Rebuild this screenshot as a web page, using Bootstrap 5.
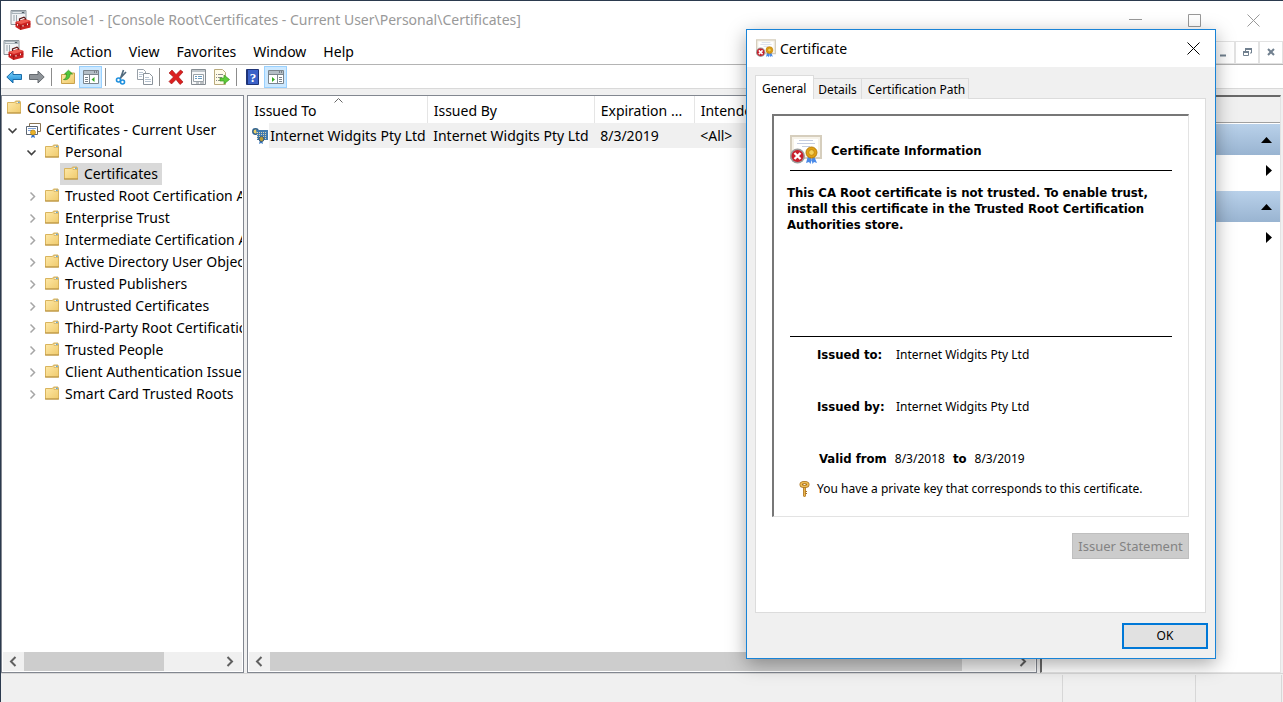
<!DOCTYPE html>
<html lang="en">
<head>
<meta charset="utf-8">
<meta name="viewport" content="width=device-width, initial-scale=1">
<title>Console1</title>
<link href="https://cdn.jsdelivr.net/npm/bootstrap@5.3.0/dist/css/bootstrap.min.css" rel="stylesheet">
<style>
  body { font-family: "Noto Sans", "Open Sans", sans-serif; font-size: 14px; line-height: 22px; color: #000; background: #fff; }
  button { color: inherit; font: inherit; background: transparent; border: 0; padding: 0; }
  svg { display: block; flex: none; }
  .mmc { height: 100vh; border: solid #2b3a4e; border-width: 1px 0 0 1px; }

  .title-row { height: 35px; color: #999; padding: 3px 19px 0 9px; }
  .caption-set { gap: 46px; }
  .menu-row { height: 29px; padding-left: 2px; border-bottom: 1px solid #b4b4b4; }
  .menu-row .menu-items { gap: 17px; margin-left: 7px; padding-top: 3px; }
  .child-box { width: 24px; height: 23px; border: 1px solid #e2e2e2; display: grid; place-items: center; }

  .tool-row { height: 24px; border-bottom: 1px solid #d9d9d9; padding: 1px 0 0 1px; }
  .tool { width: 23px; height: 22px; display: grid; place-items: center; }
  .tool.pressed { background: #cce8ff; border: 1px solid #99d1ff; }
  .tool-sep { width: 1px; height: 18px; background: #8c8c8c; margin: 0 4px 0 3px; }

  .workspace { background: #f0f0f0; padding: 6px 2px 0 0; gap: 3px; }
  .pane { background: #fff; border: 1px solid #828790; min-width: 0; }
  .tree-pane { width: 19%; flex: none; }
  .tree-pane ul { padding: 1px 0 0 4px; margin-right: 1px; overflow: hidden; }
  .tree-pane li { height: 22px; display: flex; align-items: center; white-space: nowrap; }
  .twist { width: 19px; flex: none; }
  .node { display: flex; align-items: center; height: 22px; gap: 5px; color: #000; text-decoration: none; }
  .node.chosen { background: #d9d9d9; padding: 0 4px 0 3px; margin-left: -3px; }
  .lvl-2 { padding-left: 19px; }
  .lvl-3 { padding-left: 57px; }

  .hbar { height: 19px; margin: 0 1px 1px; background: #f0f0f0; }
  .hbar button { width: 21px; display: grid; place-items: center; padding-right: 2px; }
  .hbar .thumb { background: #cdcdcd; }

  .cert-list { table-layout: fixed; width: 100%; white-space: nowrap; }
  .cert-list th { height: 27px; font-weight: 400; padding: 3px 0 0 6px; border-right: 1px solid #e5e5e5; position: relative; }
  .cert-list td { height: 25px; padding: 0 0 0 6px; background: #f0f0f0; }
  .cert-list td:first-child { background: linear-gradient(90deg, #fff 21px, #f0f0f0 21px); padding-left: 4px; }
  .sort-mark { position: absolute; top: 2px; left: 48%; }

  .action-pane { width: 241px; flex: none; background: #fff; border: 1px solid #e3e3e3; border-top: 2px solid #696969; border-left: 2px solid #696969; }
  .action-head { height: 26px; background: #f0f0f0; border-bottom: 1px solid #a0a0a0; margin-bottom: 1px; }
  .action-group { height: 31px; background: linear-gradient(#b9d1ea, #99b4d1); }
  .action-more { height: 36px; }
  .action-group button, .action-more button { padding-right: 8px; height: 100%; }
  .action-more button { height: 30px; display: block; margin-left: auto; }

  .status-row { height: 29px; background: #f0f0f0; border-top: 1px solid #d7d7d7; padding: 1px 1px 0 0; }
  .status-row div { border-right: 1px solid #d7d7d7; }

  .cert-dialog { position: absolute; left: 746px; top: 29px; width: 470px; border: 1px solid #1883d7; background: #f0f0f0;
    box-shadow: 0 5px 18px rgba(0,0,0,.34); font-size: 12px; line-height: 16px; }
  .dlg-title { height: 37px; background: #fff; font-size: 14px; padding: 0 15px 0 9px; }
  .dlg-tabs { padding: 8px 0 0 8px; height: 31px; border: 0; }
  .dlg-tabs .nav-link { border: 1px solid #dcdcdc; border-left: 0; border-bottom: 0; border-radius: 0; color: #000; background: #f0f0f0; height: 21px; margin: 0; padding: 1px 4px 0; }
  .dlg-tabs .nav-item:last-child .nav-link { padding: 1px 3px 0 6px; }
  .dlg-tabs .nav-link.active { border: 1px solid #dcdcdc; border-bottom: 0; background: #fff; color: #000; height: 24px; padding: 2px 7px 0 6px; position: relative; z-index: 1; }
  .dlg-page { background: #fff; border: 1px solid #dcdcdc; margin: 0 9px 10px 8px; padding: 15px 16px 53px 16px; }
  .sunken { border: solid #e3e3e3; border-width: 2px 1px 1px 2px; border-top-color: #777; border-left-color: #777; height: 403px; padding: 19px 16px 0 14px; }
  .strong-text { font-family: "DejaVu Sans Condensed", "DejaVu Sans", sans-serif; font-size: 13px; font-weight: 700; }
  .info-head { height: 36px; border-bottom: 1px solid #000; margin-left: 2px; gap: 9px; }
  .info-text { height: 165px; padding-top: 14px; margin: 0 -8px 0 -1px; width: 375px; }
  .info-body { border-top: 1px solid #000; margin-left: 2px; padding: 10px 0 0 27px; }
  .fact { height: 52px; }
  .fact dt { width: 79px; }
  .validity { gap: 8px; padding-left: 2px; height: 30px; }
  .key-line { margin-left: -18px; gap: 7px; }
  .win-btn { height: 26px; border: 1px solid #bfbfbf; background: #ccc; color: #838383; padding: 0; }
  .issuer-btn { width: 117px; font-size: 13px; }
  .ok-btn { border: 2px solid #0078d7; background: #e1e1e1; color: #000; width: 86px; }
  .dlg-foot { padding: 0 7px 9px; }
</style>
</head>
<body>
<svg class="position-absolute" width="0" height="0" aria-hidden="true">
  <linearGradient id="gFold" x1="0" y1="0" x2="1" y2="1"><stop offset="0" stop-color="#ffeaaa"/><stop offset="1" stop-color="#efca6c"/></linearGradient>
  <linearGradient id="gBlue" x1="0" y1="0" x2="0" y2="1"><stop offset="0" stop-color="#7fd4fb"/><stop offset="1" stop-color="#1487d4"/></linearGradient>
  <symbol id="folder" viewBox="0 0 16 16"><path d="M1.500 2.500h7l1-1.500h4.500v1.500h.5v10.500h-13z" fill="url(#gFold)" stroke="#d9b45e"/><path d="M10 1.500h4v2h-4z" fill="#fff6d4" stroke="#c9a24c" stroke-width=".6"/><path d="M12 2.300h1.700" stroke="#3b94d9"/><path d="M1 13h14" stroke="#b58f3e"/></symbol>
  <symbol id="toolbox" viewBox="0 0 20 20"><path d="M.5.5h15v14H.5z" fill="#f1f3f5" stroke="#8c959c"/><path d="M1 1h14v3H1z" fill="#a9b3ba"/><path d="M2 2.500h9" stroke="#e5e9ec"/><path d="M11.500 2.500h2" stroke="#505b63"/><path d="M2.500 6h2M2.500 8h2M2.500 10h2M6 5v9" stroke="#9aa5ad"/><path d="M5 12l9.500-3 5.500 2v6.500L10 20l-5-3z" fill="#cc2222"/><path d="M5 12l9.500-3 5.500 2-9.500 3z" fill="#ee5b50"/><path d="M9 11V9l4.500-1.700 1.300 1v1.500" fill="none" stroke="#5a1818" stroke-width="1.200"/><path d="M5 14.500l5.200 2 9.800-2.500M10.200 15v5" stroke="#8f1212" stroke-width=".7" fill="none"/><path d="M7 14v1.700M12.500 15v1.700M17 13.500v1.700" stroke="#fff" stroke-width=".9"/></symbol>
  <symbol id="cert-bad" viewBox="0 0 32 30"><path d="M1 1h30v22H1z" fill="#f6f2e8" stroke="#d6cebd" stroke-width="2"/><path d="M4 4h24v16H4z" fill="#fff"/><path d="M9 5.500h14M7 8.500h18M12 11.500h8" stroke="#c5cde0" stroke-width="1"/><path d="M18 21l-2 7 3-1 1.500 2 2-7zM24 21l3 7-3-1-1.500 2-1.500-7z" fill="#4a8ae8"/><circle cx="21.500" cy="17.500" r="5.500" fill="#e0a112" stroke="#b87b08"/><circle cx="21.500" cy="17.500" r="2.800" fill="#f5cf55" stroke="#b87b08" stroke-width=".7"/><circle cx="7.500" cy="21" r="7.500" fill="#9b9b9b"/><circle cx="7.500" cy="21" r="6" fill="#c91f2c"/><path d="M4.500 18l6 6m0-6l-6 6" stroke="#fff" stroke-width="2.300"/></symbol>
  <symbol id="arr-l" viewBox="0 0 9 11"><path d="M7.500 1L3 5.500 7.500 10" fill="none" stroke="#606060" stroke-width="2"/></symbol>
  <symbol id="arr-r" viewBox="0 0 9 11"><path d="M1.500 1L6 5.500 1.500 10" fill="none" stroke="#606060" stroke-width="2"/></symbol>
  <symbol id="up-tri" viewBox="0 0 11 6"><path d="M5.500 0L11 6H0z"/></symbol>
  <symbol id="side-tri" viewBox="0 0 6 11"><path d="M0 0l6 5.500L0 11z"/></symbol>
  <symbol id="chev-open" viewBox="0 0 12 12"><path d="M2.500 4.500L6.500 8.500 10.500 4.500" fill="none" stroke="#404040" stroke-width="1.600"/></symbol>
  <symbol id="chev-shut" viewBox="0 0 12 12"><path d="M5.500 2.500l4 4-4 4" fill="none" stroke="#a6a6a6" stroke-width="1.500"/></symbol>
</svg>

<div class="mmc d-flex flex-column position-relative overflow-hidden">
  <header class="title-row d-flex align-items-center justify-content-between">
    <div class="d-flex align-items-center gap-1"><svg width="21" height="20"><use href="#toolbox"/></svg><span>Console1 - [Console Root\Certificates - Current User\Personal\Certificates]</span></div>
    <div class="caption-set d-flex align-items-center">
      <button aria-label="Minimize"><svg width="13" height="13"><path d="M0 5.500h13" stroke="#999"/></svg></button>
      <button aria-label="Maximize"><svg width="13" height="13"><path d="M.5.5h12v12H.5z" fill="none" stroke="#999"/></svg></button>
      <button class="pe-1" aria-label="Close"><svg width="13" height="13"><path d="M.5.5l12 12m0-12l-12 12" stroke="#999"/></svg></button>
    </div>
  </header>

  <nav class="menu-row d-flex align-items-center justify-content-between">
    <div class="d-flex align-items-center">
      <svg width="21" height="20"><use href="#toolbox"/></svg>
      <div class="menu-items d-flex"><button>File</button><button>Action</button><button>View</button><button>Favorites</button><button>Window</button><button>Help</button></div>
    </div>
    <div class="d-flex pt-1">
      <button class="child-box" aria-label="Minimize child"><svg width="7" height="9"><path d="M0 7.500h6" stroke="#71808f" stroke-width="2"/></svg></button>
      <button class="child-box" aria-label="Restore child"><svg width="9" height="9"><path d="M2.500 3V1h6v4H7M.5 3.500h5v4h-5z" fill="none" stroke="#71808f"/><path d="M2 1h7M0 4h6" stroke="#71808f" stroke-width="2"/></svg></button>
      <button class="child-box" aria-label="Close child"><svg width="8" height="8"><path d="M1 1l6 6m0-6L1 7" stroke="#71808f" stroke-width="2"/></svg></button>
    </div>
  </nav>

  <div class="tool-row d-flex align-items-center" role="toolbar" aria-label="Tools">
    <button class="tool" aria-label="Back"><svg width="16" height="14"><path d="M.8 7L7 1v3.500h8.500v5H7V13z" fill="url(#gBlue)" stroke="#1b6ca8"/></svg></button>
    <button class="tool" aria-label="Forward"><svg width="16" height="14"><path d="M15.200 7L9 1v3.500H.5v5H9V13z" fill="#8f9499" stroke="#666b70"/></svg></button>
    <span class="tool-sep"></span>
    <button class="tool" aria-label="Up one level"><svg width="16" height="16"><path d="M1.500 5.500h5l1-1.500h7v10.500h-13z" fill="url(#gFold)" stroke="#c9a24c"/><path d="M3.500 10.500c2 0 3-2.500 3-5.500H4.500L8.500 1.200 12.500 5h-2.500c0 4-2.500 6.500-6.500 5.500z" fill="#4fc63a" stroke="#2e9420" stroke-width=".7"/></svg></button>
    <button class="tool pressed" aria-label="Show console tree"><svg width="16" height="14"><path d="M.5.5h15v13H.5z" fill="#fff" stroke="#7b858d"/><path d="M1 2.500h14" stroke="#b3bdc5" stroke-width="3"/><path d="M11 2h1m1 0h1" stroke="#3d464d"/><path d="M1 4.500h14M6.500 5v9" stroke="#7b858d"/><path d="M2 7.500h3M2 9.500h3M2 11.500h3" stroke="#7b858d"/><path d="M11.500 7v5L8.500 9.500z" fill="#35ab22"/></svg></button>
    <span class="tool-sep"></span>
    <button class="tool" aria-label="Cut"><svg width="16" height="16"><path d="M9.500 1L6.500 9.500M12 3L5.500 10" stroke="#526a7d" stroke-width="1.700"/><circle cx="4.500" cy="11" r="2" fill="#fff" stroke="#1e8fdd" stroke-width="1.600"/><circle cx="8.500" cy="13" r="2" fill="#fff" stroke="#1e8fdd" stroke-width="1.600"/></svg></button>
    <button class="tool" aria-label="Copy"><svg width="16" height="16"><path d="M.5.5h6l2 2v8h-8z" fill="#fff" stroke="#98a0a8"/><path d="M6.500 4.500h6l3 3v8h-9z" fill="#fff" stroke="#8a929a"/><path d="M2 3.500h4M2 5.500h4M2 7.500h3M8 8.500h4M8 10.500h6M8 12.500h6" stroke="#b7c4d2"/></svg></button>
    <span class="tool-sep"></span>
    <button class="tool" aria-label="Delete"><svg width="16" height="16"><path d="M1 4l3-3 4 4.500L12.500 1l2.500 2-4.500 5L15 13l-3 2.500-4-5L3.500 15 1 12.500 5.500 8z" fill="#dc1f1f" stroke="#9d0d0d" stroke-width=".6"/></svg></button>
    <button class="tool" aria-label="Properties"><svg width="15" height="16"><path d="M.5.5h14v15H.5z" fill="#f7f8f9" stroke="#858c92"/><path d="M1 2h13" stroke="#bfc6cb" stroke-width="2"/><path d="M2.500 5.500h10v7h-10z" fill="#fff" stroke="#9aa2a8"/><path d="M4 7.500h2M7 7.500h4M4 9.500h2M7 9.500h4" stroke="#6a9cc0"/><path d="M5 14h3m1 0h4" stroke="#858c92"/></svg></button>
    <button class="tool" aria-label="Export list"><svg width="17" height="16"><path d="M1.500.5h8l3 3v12h-11z" fill="#fffbe8" stroke="#b9aa7c"/><path d="M3 5.500h1m1 0h5M3 8.500h1m1 0h4M3 11.500h1m1 0h4" stroke="#8b8b8b"/><path d="M7 9h4V6l5.500 4.500L11 15v-3H7z" fill="#5ccb39" stroke="#3c9c22" stroke-width=".7"/></svg></button>
    <span class="tool-sep"></span>
    <button class="tool" aria-label="Help"><svg width="13" height="16"><path d="M.5.5h12v15H.5z" fill="#3c62c8" stroke="#1f3478"/><path d="M1.500 1v14" stroke="#1f3478"/><text x="7" y="12.500" text-anchor="middle" font-family="Liberation Serif, serif" font-size="13" font-weight="700" fill="#fff">?</text></svg></button>
    <button class="tool pressed" aria-label="Show action pane"><svg width="16" height="14"><path d="M.5.5h15v13H.5z" fill="#fff" stroke="#7b858d"/><path d="M1 2.500h14" stroke="#b3bdc5" stroke-width="3"/><path d="M11 2h1m1 0h1" stroke="#3d464d"/><path d="M1 4.500h14M9.500 5v9" stroke="#7b858d"/><path d="M11 7.500h3M11 9.500h3M11 11.500h3" stroke="#7b858d"/><path d="M4 7v5l3-2.500z" fill="#35ab22"/></svg></button>
  </div>

  <main class="workspace d-flex flex-grow-1">
    <section class="pane tree-pane d-flex flex-column">
      <ul class="list-unstyled mb-0 flex-grow-1">
        <li><a class="node" href="#"><svg width="16" height="16"><use href="#folder"/></svg>Console Root</a></li>
        <li><button class="twist" aria-label="Collapse"><svg width="12" height="12"><use href="#chev-open"/></svg></button><a class="node" href="#"><svg width="16" height="16"><path d="M4.500 1.500h11v8h-11z" fill="#fff" stroke="#8a7554"/><path d="M1.500 4.500h11v8h-11z" fill="#fff" stroke="#5c6570"/><path d="M3 6.500h8M3 8.500h4" stroke="#7c9fd6"/><path d="M7 12l-1 4 2-1 2 1-1-4z" fill="#2f6fd0"/><circle cx="8" cy="10.500" r="2.500" fill="#eab32c" stroke="#a97908" stroke-width=".6"/></svg>Certificates - Current User</a></li>
        <li class="lvl-2"><button class="twist" aria-label="Collapse"><svg width="12" height="12"><use href="#chev-open"/></svg></button><a class="node" href="#"><svg width="16" height="16"><use href="#folder"/></svg>Personal</a></li>
        <li class="lvl-3"><a class="node chosen" href="#"><svg width="16" height="16"><use href="#folder"/></svg>Certificates</a></li>
        <li class="lvl-2"><button class="twist" aria-label="Expand"><svg width="12" height="12"><use href="#chev-shut"/></svg></button><a class="node" href="#"><svg width="16" height="16"><use href="#folder"/></svg>Trusted Root Certification Authorities</a></li>
        <li class="lvl-2"><button class="twist" aria-label="Expand"><svg width="12" height="12"><use href="#chev-shut"/></svg></button><a class="node" href="#"><svg width="16" height="16"><use href="#folder"/></svg>Enterprise Trust</a></li>
        <li class="lvl-2"><button class="twist" aria-label="Expand"><svg width="12" height="12"><use href="#chev-shut"/></svg></button><a class="node" href="#"><svg width="16" height="16"><use href="#folder"/></svg>Intermediate Certification Authorities</a></li>
        <li class="lvl-2"><button class="twist" aria-label="Expand"><svg width="12" height="12"><use href="#chev-shut"/></svg></button><a class="node" href="#"><svg width="16" height="16"><use href="#folder"/></svg>Active Directory User Object</a></li>
        <li class="lvl-2"><button class="twist" aria-label="Expand"><svg width="12" height="12"><use href="#chev-shut"/></svg></button><a class="node" href="#"><svg width="16" height="16"><use href="#folder"/></svg>Trusted Publishers</a></li>
        <li class="lvl-2"><button class="twist" aria-label="Expand"><svg width="12" height="12"><use href="#chev-shut"/></svg></button><a class="node" href="#"><svg width="16" height="16"><use href="#folder"/></svg>Untrusted Certificates</a></li>
        <li class="lvl-2"><button class="twist" aria-label="Expand"><svg width="12" height="12"><use href="#chev-shut"/></svg></button><a class="node" href="#"><svg width="16" height="16"><use href="#folder"/></svg>Third-Party Root Certification Authorities</a></li>
        <li class="lvl-2"><button class="twist" aria-label="Expand"><svg width="12" height="12"><use href="#chev-shut"/></svg></button><a class="node" href="#"><svg width="16" height="16"><use href="#folder"/></svg>Trusted People</a></li>
        <li class="lvl-2"><button class="twist" aria-label="Expand"><svg width="12" height="12"><use href="#chev-shut"/></svg></button><a class="node" href="#"><svg width="16" height="16"><use href="#folder"/></svg>Client Authentication Issuers</a></li>
        <li class="lvl-2"><button class="twist" aria-label="Expand"><svg width="12" height="12"><use href="#chev-shut"/></svg></button><a class="node" href="#"><svg width="16" height="16"><use href="#folder"/></svg>Smart Card Trusted Roots</a></li>
      </ul>
      <div class="hbar d-flex"><button aria-label="Scroll left"><svg width="9" height="11"><use href="#arr-l"/></svg></button><div class="flex-grow-1"><div class="thumb h-100" style="width:71%"></div></div><button aria-label="Scroll right"><svg width="9" height="11"><use href="#arr-r"/></svg></button></div>
    </section>

    <section class="pane flex-grow-1 d-flex flex-column">
      <div class="flex-grow-1">
        <table class="cert-list">
          <colgroup><col style="width:179px"><col style="width:167px"><col style="width:100px"><col></colgroup>
          <thead><tr>
            <th scope="col">Issued To<svg class="sort-mark" width="9" height="5"><path d="M.5 4.500l4-4 4 4" fill="none" stroke="#666"/></svg></th>
            <th scope="col">Issued By</th><th scope="col">Expiration ...</th><th scope="col">Intended Purposes</th></tr></thead>
          <tbody><tr>
            <td><div class="d-flex align-items-center"><svg width="18" height="16"><circle cx="3.500" cy="3.500" r="2.700" fill="#e9d06b" stroke="#30628f" stroke-width="1.500"/><path d="M4 2h12v10H5V6z" fill="#3f7ab0"/><path d="M5 4.500h10M5 6.500h10M5 8.500h10M5 10.500h10" stroke="#dcd2ae" stroke-dasharray="1 1"/><path d="M8 12l-1 4 2-1 2 1-1-4z" fill="#3577c0"/><circle cx="9.500" cy="11" r="2.500" fill="#b79a34" stroke="#31587c"/></svg><span>Internet Widgits Pty Ltd</span></div></td>
            <td>Internet Widgits Pty Ltd</td><td>8/3/2019</td><td>&lt;All&gt;</td></tr></tbody>
        </table>
      </div>
      <div class="hbar d-flex"><button aria-label="Scroll left"><svg width="9" height="11"><use href="#arr-l"/></svg></button><div class="flex-grow-1"><div class="thumb h-100" style="width:93%"></div></div><button aria-label="Scroll right"><svg width="9" height="11"><use href="#arr-r"/></svg></button></div>
    </section>

    <aside class="action-pane">
      <div class="action-head"></div>
      <div class="action-group text-end"><button aria-label="Collapse group"><svg width="11" height="6"><use href="#up-tri"/></svg></button></div>
      <div class="action-more"><button aria-label="More actions"><svg width="6" height="11"><use href="#side-tri"/></svg></button></div>
      <div class="action-group text-end"><button aria-label="Collapse group"><svg width="11" height="6"><use href="#up-tri"/></svg></button></div>
      <div class="action-more"><button aria-label="More actions"><svg width="6" height="11"><use href="#side-tri"/></svg></button></div>
    </aside>
  </main>

  <footer class="status-row d-flex"><div class="flex-grow-1"></div><div style="width:133px"></div><div style="width:86px"></div></footer>
</div>

<div class="cert-dialog" role="dialog" aria-labelledby="dlgName">
  <div class="dlg-title d-flex align-items-center justify-content-between">
    <div class="d-flex align-items-center gap-1"><svg width="20" height="19"><use href="#cert-bad"/></svg><span id="dlgName">Certificate</span></div>
    <button aria-label="Close"><svg width="13" height="13"><path d="M.5.5l12 12m0-12l-12 12" stroke="#000"/></svg></button>
  </div>
  <ul class="dlg-tabs nav nav-tabs align-items-end" role="tablist">
    <li class="nav-item"><button class="nav-link active" role="tab" aria-selected="true">General</button></li>
    <li class="nav-item"><button class="nav-link" role="tab">Details</button></li>
    <li class="nav-item"><button class="nav-link" role="tab">Certification Path</button></li>
  </ul>
  <div class="dlg-page">
    <div class="sunken">
      <div class="info-head d-flex align-items-start"><svg width="32" height="30"><use href="#cert-bad"/></svg><span class="strong-text pt-2">Certificate Information</span></div>
      <p class="info-text strong-text">This CA Root certificate is not trusted. To enable trust, install this certificate in the Trusted Root Certification Authorities store.</p>
      <div class="info-body">
        <dl class="mb-0">
          <div class="fact d-flex"><dt class="strong-text">Issued to:</dt><dd>Internet Widgits Pty Ltd</dd></div>
          <div class="fact d-flex"><dt class="strong-text">Issued by:</dt><dd>Internet Widgits Pty Ltd</dd></div>
        </dl>
        <div class="validity d-flex"><span class="strong-text">Valid from</span><span>8/3/2018</span><span class="strong-text">to</span><span>8/3/2019</span></div>
        <div class="key-line d-flex"><svg width="11" height="17"><path d="M4.500 6h2v9l-1 1-1-1z" fill="#edb64a" stroke="#a8701d" stroke-width=".8"/><ellipse cx="5.500" cy="3.500" rx="3.500" ry="2" fill="#fff" stroke="#a8701d" stroke-width="3"/><ellipse cx="5.500" cy="3.500" rx="3.500" ry="2" fill="none" stroke="#f0bf55" stroke-width="1.500"/><path d="M6.500 10.500h1.500M6.500 12.500h1.500" stroke="#a8701d"/></svg><span>You have a private key that corresponds to this certificate.</span></div>
      </div>
    </div>
    <div class="text-end mt-3"><button class="win-btn issuer-btn" disabled>Issuer Statement</button></div>
  </div>
  <div class="dlg-foot text-end"><button class="win-btn ok-btn">OK</button></div>
</div>
<script src="https://cdn.jsdelivr.net/npm/bootstrap@5.3.0/dist/js/bootstrap.bundle.min.js"></script>
</body>
</html>
